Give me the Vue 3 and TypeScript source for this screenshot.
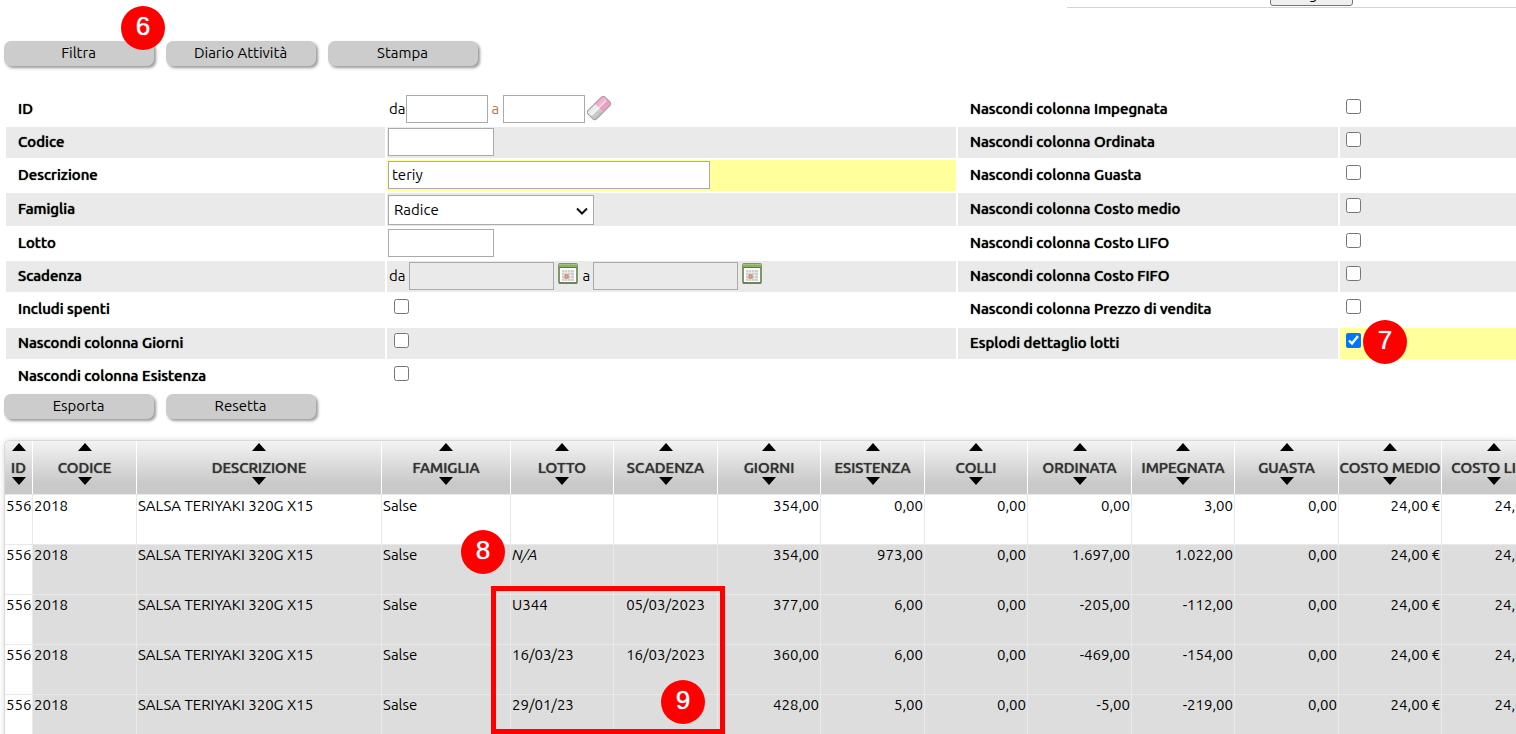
<script setup lang="ts">
import { ref } from 'vue'

interface Flag { id: string; label: string; checked: boolean }
interface Row {
  lotto: string
  scadenza: string
  values: string[]
}

const descrizione = ref('teriy')
const famiglia = ref('Radice')

const leftFlags = ref<Flag[]>([
  { id: 'spenti', label: 'Includi spenti', checked: false },
  { id: 'giorni', label: 'Nascondi colonna Giorni', checked: false },
  { id: 'esistenza', label: 'Nascondi colonna Esistenza', checked: false },
])

const rightFlags = ref<Flag[]>([
  { id: 'impegnata', label: 'Nascondi colonna Impegnata', checked: false },
  { id: 'ordinata', label: 'Nascondi colonna Ordinata', checked: false },
  { id: 'guasta', label: 'Nascondi colonna Guasta', checked: false },
  { id: 'medio', label: 'Nascondi colonna Costo medio', checked: false },
  { id: 'lifo', label: 'Nascondi colonna Costo LIFO', checked: false },
  { id: 'fifo', label: 'Nascondi colonna Costo FIFO', checked: false },
  { id: 'prezzo', label: 'Nascondi colonna Prezzo di vendita', checked: false },
  { id: 'esplodi', label: 'Esplodi dettaglio lotti', checked: true },
])

const columns = [
  'ID', 'CODICE', 'DESCRIZIONE', 'FAMIGLIA', 'LOTTO', 'SCADENZA', 'GIORNI',
  'ESISTENZA', 'COLLI', 'ORDINATA', 'IMPEGNATA', 'GUASTA', 'COSTO MEDIO', 'COSTO LIFO',
]

const rows: Row[] = [
  { lotto: '', scadenza: '', values: ['354,00', '0,00', '0,00', '0,00', '3,00', '0,00', '24,00 €', '24,00 €'] },
  { lotto: 'N/A', scadenza: '', values: ['354,00', '973,00', '0,00', '1.697,00', '1.022,00', '0,00', '24,00 €', '24,00 €'] },
  { lotto: 'U344', scadenza: '05/03/2023', values: ['377,00', '6,00', '0,00', '-205,00', '-112,00', '0,00', '24,00 €', '24,00 €'] },
  { lotto: '16/03/23', scadenza: '16/03/2023', values: ['360,00', '6,00', '0,00', '-469,00', '-154,00', '0,00', '24,00 €', '24,00 €'] },
  { lotto: '29/01/23', scadenza: '', values: ['428,00', '5,00', '0,00', '-5,00', '-219,00', '0,00', '24,00 €', '24,00 €'] },
]
</script>

<template>
  <main class="page">
    <header class="strip">
      <button type="button" class="native">Esegui</button>
    </header>

    <div class="actions top">
      <button type="button" class="pill">Filtra<span class="badge b6">6</span></button>
      <button type="button" class="pill">Diario Attività</button>
      <button type="button" class="pill">Stampa</button>
    </div>

    <form class="filters" @submit.prevent>
      <div class="side left">
        <label class="name" for="id-da">ID</label>
        <div class="field">
          <label for="id-da">da</label><input id="id-da" class="w-id" type="text">
          <label for="id-a" class="to">a</label><input id="id-a" class="w-id" type="text">
          <button type="button" class="icon" aria-label="Cancella">
            <svg width="26" height="26" viewBox="0 0 26 26">
              <defs>
                <linearGradient id="rub" x1="0" y1="0" x2="0" y2="1">
                  <stop offset="0" stop-color="#e4e4e4" /><stop offset=".45" stop-color="#f2f2f2" />
                  <stop offset=".55" stop-color="#cfcfcf" /><stop offset="1" stop-color="#bcbcbc" />
                </linearGradient>
                <linearGradient id="pink" x1="0" y1="0" x2="0" y2="1">
                  <stop offset="0" stop-color="#eda3c5" /><stop offset=".45" stop-color="#f6bdd6" />
                  <stop offset=".55" stop-color="#ea9bc0" /><stop offset="1" stop-color="#e9a6c5" />
                </linearGradient>
              </defs>
              <g transform="rotate(-45 12 12)">
                <path d="M12 6H3Q0 6 0 9V15Q0 18 3 18H12Z" fill="url(#rub)" />
                <path d="M12 6H21Q24 6 24 9V15Q24 18 21 18H12Z" fill="url(#pink)" />
                <rect x="0" y="6" width="24" height="12" rx="3" fill="none" stroke="#a59aa0" />
                <path d="M2 12H22" stroke="#fff" stroke-opacity=".7" />
              </g>
            </svg>
          </button>
        </div>

        <label class="name alt" for="codice">Codice</label>
        <div class="field alt"><input id="codice" class="w-code" type="text"></div>

        <label class="name" for="descrizione">Descrizione</label>
        <div class="field active"><input id="descrizione" v-model="descrizione" class="w-desc" type="text"></div>

        <label class="name alt" for="famiglia">Famiglia</label>
        <div class="field alt">
          <div class="select">
            <select id="famiglia" v-model="famiglia"><option>Radice</option></select>
            <svg width="12" height="8" viewBox="0 0 12 8"><path d="M1 1.500 L6 6.500 L11 1.500" fill="none" stroke="#111" stroke-width="2" /></svg>
          </div>
        </div>

        <label class="name" for="lotto">Lotto</label>
        <div class="field"><input id="lotto" class="w-code" type="text"></div>

        <label class="name alt" for="scad-da">Scadenza</label>
        <div class="field alt dates">
          <template v-for="(part, i) in ['da', 'a']" :key="part">
            <label :for="'scad-' + part">{{ part }}</label>
            <input :id="'scad-' + part" class="w-date" type="text" readonly>
            <button type="button" class="icon cal" :aria-label="i ? 'Calendario a' : 'Calendario da'">
              <svg width="20" height="21" viewBox="0 0 20 21">
                <rect x="1" y="1" width="18" height="19" rx="1" fill="#fff" stroke="#7f9868" stroke-width="2" />
                <path d="M1 20h18" stroke="#6f8259" stroke-width="2" />
                <rect x="1" y="1" width="18" height="4" fill="#88b35e" />
                <rect x="1" y="1" width="18" height="1" fill="#a3c383" />
                <path d="M1 4.500h18" stroke="#568334" />
                <rect x="4" y="7" width="12" height="11" fill="#cfcfcf" />
                <path d="M4 9.500h12M4 12.500h12M4 15.500h12M6.500 7v11M9.500 7v11M12.500 7v11" stroke="#e6e6e6" />
                <rect x="7" y="12" width="3" height="3" fill="#f0b9a3" stroke="#d4714e" />
              </svg>
            </button>
          </template>
        </div>

        <template v-for="(flag, i) in leftFlags" :key="flag.id">
          <label class="name" :class="{ alt: i % 2 === 1 }" :for="flag.id">{{ flag.label }}</label>
          <div class="field check" :class="{ alt: i % 2 === 1 }"><input :id="flag.id" v-model="flag.checked" type="checkbox"></div>
        </template>
      </div>

      <div class="side right">
        <template v-for="(flag, i) in rightFlags" :key="flag.id">
          <label class="name" :class="{ alt: i % 2 === 1 }" :for="flag.id">{{ flag.label }}</label>
          <div class="field check" :class="{ alt: i % 2 === 1, active: flag.checked }">
            <input :id="flag.id" v-model="flag.checked" type="checkbox">
            <span v-if="flag.id === 'esplodi'" class="badge b7">7</span>
          </div>
        </template>
      </div>
    </form>

    <div class="actions">
      <button type="button" class="pill">Esporta</button>
      <button type="button" class="pill">Resetta</button>
    </div>

    <div class="grid">
      <table>
        <colgroup>
          <col class="c-id"><col class="c-code"><col class="c-desc"><col class="c-fam">
          <col v-for="n in 10" :key="n" :class="n % 2 ? 'c-odd' : 'c-even'">
        </colgroup>
        <thead>
          <tr>
            <th v-for="name in columns" :key="name" scope="col">
              <svg width="14" height="8" viewBox="0 0 14 8"><path d="M0 8L7 0L14 8Z" /></svg>
              <span>{{ name }}</span>
              <svg width="14" height="8" viewBox="0 0 14 8"><path d="M0 0L7 8L14 0Z" /></svg>
            </th>
          </tr>
        </thead>
        <tbody>
          <tr v-for="(row, i) in rows" :key="i" :class="{ detail: i > 0 }">
            <td class="id">556</td>
            <td>2018</td>
            <td>SALSA TERIYAKI 320G X15</td>
            <td :class="{ anchor: i === 1 }">Salse<span v-if="i === 1" class="badge b8">8</span></td>
            <td :class="{ anchor: i === 2 }">
              <em v-if="row.lotto === 'N/A'">N/A</em><template v-else>{{ row.lotto }}</template>
              <div v-if="i === 2" class="frame"><span class="badge b9">9</span></div>
            </td>
            <td class="center">{{ row.scadenza }}</td>
            <td v-for="(value, n) in row.values" :key="n" class="num">{{ value }}</td>
          </tr>
        </tbody>
      </table>
    </div>
  </main>
</template>

<style>
body { margin: 0; background: #fff; }
</style>

<style scoped>
.page {
  height: 100vh;
  overflow: hidden;
  color: #000;
  font: 15px/20px Ubuntu, "Noto Sans", sans-serif;
}
button, input, select { box-sizing: border-box; font: inherit; color: inherit; }

.strip {
  box-sizing: border-box;
  display: flex;
  align-items: flex-end;
  height: 8px;
  margin-left: 1067px;
  padding: 0 0 1px 203px;
  border-bottom: 1px solid #d5d5d5;
  overflow: hidden;
}
.native {
  flex: none;
  width: 83px;
  height: 24px;
  padding: 0 8px 0 0;
  border: 1px solid #767676;
  border-radius: 3px;
  background: #efefef;
}

.actions { display: flex; gap: 12px; padding: 2px 4px 0; }
.actions.top { padding-top: 33px; }
.pill {
  position: relative;
  width: 150px;
  height: 25px;
  padding: 0 1px 1px 0;
  border: 0;
  border-radius: 7px;
  background: #ccc;
  box-shadow: 2px 2px 3px #999;
}

.badge {
  position: absolute;
  z-index: 2;
  width: 44px;
  height: 44px;
  border-radius: 50%;
  background: #f00;
  color: #fff;
  font: 26px/40px "Liberation Sans", sans-serif;
  text-align: center;
  text-shadow: 0 0 1px #fff;
}
.b6 { left: 117px; top: -35px; }
.b7 { left: 23px; top: -8px; }
.b8 { right: 5px; top: -15px; }
.b9 { right: 15px; bottom: 5px; }

.filters {
  display: grid;
  grid-template-columns: 950fr 558fr;
  gap: 2px;
  padding: 28px 0 0 6px;
}
.side { display: grid; gap: 2px; grid-template-rows: 31px 31px 31px 33px 31px 31px 32px 31px 31px; }
.left { grid-template-columns: 379fr 569fr; }
.right { grid-template-columns: 380fr 176fr; }
.name {
  display: flex;
  align-items: center;
  padding: 0 0 2px 12px;
  font-weight: 500;
  text-shadow: 0 0 1px #000;
}
.field {
  position: relative;
  box-sizing: border-box;
  display: flex;
  align-items: center;
  padding: 0 0 2px 1px;
}
.alt { background: #eaeaea; }
.active { background: #ffff9c; }
.field input[type="text"] {
  height: 28px;
  padding: 0 3px;
  border: 1px solid #aaa;
  background: #fff;
}
.field label { padding-left: 1px; }
.field .to { padding: 0 4px; color: #c87137; }
.field .w-id { width: 82px; }
.field .w-code { width: 106px; }
.field .w-desc { width: 322px; }
.field input.w-date { width: 145px; background: #eaeaea; }
.dates { gap: 3px; }
.icon { display: flex; padding: 0; border: 0; background: none; margin: 0 2px; }
.cal { align-self: flex-start; margin: 2px 1px 0; }
.select { position: relative; display: flex; margin-top: 2px; }
.select select {
  appearance: none;
  width: 206px;
  height: 30px;
  padding: 0 5px;
  border: 1px solid #aaa;
  border-radius: 0;
  background: #fff;
}
.select svg { position: absolute; right: 6px; top: 12px; pointer-events: none; }
.check { align-items: flex-start; }
.check input { width: 15px; height: 15px; margin: 5px; }
.left .check input { margin-left: 6px; }

.grid {
  margin: 21px 0 0 4px;
  border: 1px solid #d8d8d8;
  border-right: 0;
  border-radius: 6px 0 0 0;
  box-shadow: 0 0 6px #ddd;
  overflow: hidden;
}
table { width: 1541px; table-layout: fixed; border-collapse: separate; border-spacing: 0; }
.c-id { width: 28px; }
.c-code { width: 104px; }
.c-desc { width: 245px; }
.c-fam { width: 129px; }
.c-odd { width: 103px; }
.c-even { width: 104px; }
thead tr { background: linear-gradient(#f3f3f3, #c9c9c9 80%); }
th {
  box-sizing: border-box;
  height: 53px;
  padding: 2px 0 0;
  border-right: 1px solid #fff;
  color: #333;
  font-weight: 500;
  text-shadow: 0 0 1px #333;
  vertical-align: top;
  white-space: nowrap;
}
th svg { display: block; margin: 0 auto; }
th span { display: block; margin: 7px 0 -1px; }
td {
  box-sizing: border-box;
  height: 50px;
  padding: 1px;
  border-top: 1px solid #e9e9e9;
  border-right: 1px solid #e9e9e9;
  vertical-align: top;
  white-space: nowrap;
}
.detail td { padding-top: 0; background: #ddd; }
.detail td.id { background: #fff; }
.num { text-align: right; }
.center { text-align: center; }
.anchor { position: relative; }
.frame {
  position: absolute;
  z-index: 1;
  left: -20px;
  top: -9px;
  box-sizing: border-box;
  width: 234px;
  height: 148px;
  border: 5px solid #f00;
}
</style>
